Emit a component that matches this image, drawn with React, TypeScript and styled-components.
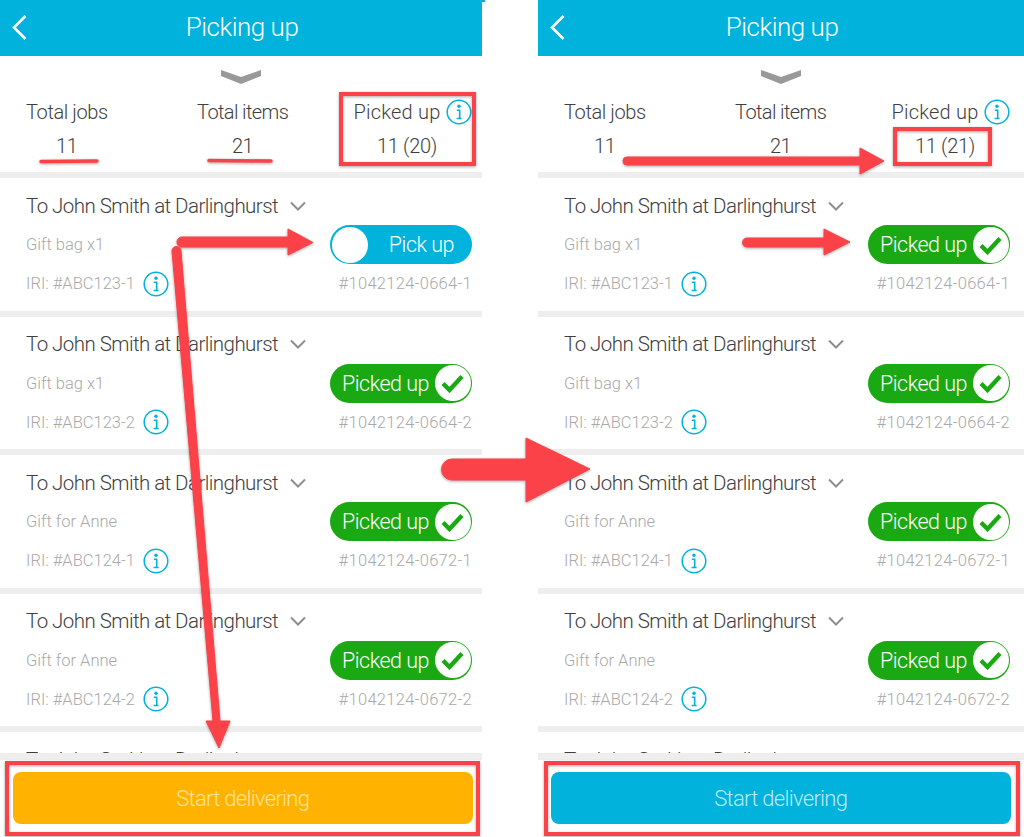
import { createGlobalStyle } from "styled-components";
import styled from "styled-components";

const GlobalStyle = createGlobalStyle`
  html, body {
    margin: 0;
    padding: 0;
    background: #fff;
  }
  body {
    font-family: Roboto, "Liberation Sans", sans-serif;
    font-weight: 300;
    overflow: hidden;
  }
`;

const BLUE = "#00b2dc";
const GREEN = "#1ba913";
const ORANGE = "#ffb300";
const RED = "#fb4248";
const SEP = "#eeeeee";

const Page = styled.div`
  position: relative;
  display: flex;
  gap: 56px;
  width: 1024px;
  height: 837px;
  overflow: hidden;
`;
const Phone = styled.div<{ $width: number }>`
  display: flex;
  flex-direction: column;
  flex: none;
  width: ${(props) => props.$width}px;
  height: 837px;
`;
const Header = styled.div<{ $notch: boolean }>`
  position: relative;
  flex: none;
  display: flex;
  align-items: center;
  justify-content: center;
  height: 56px;
  background-color: ${BLUE};
  color: #fff;
  font-size: 26px;
  letter-spacing: -0.5px;
  padding-bottom: 2px;
  padding-left: 2px;
  box-sizing: border-box;

  &::after {
    content: "";
    display: ${(props) => (props.$notch ? "block" : "none")};
    position: absolute;
    left: 100%;
    top: 0;
    width: 3px;
    height: 2px;
    background-color: ${BLUE};
  }
`;
const BackIcon = styled.svg`
  position: absolute;
  left: 11px;
  top: 14px;
  width: 17px;
  height: 27px;
`;
const Summary = styled.div`
  flex: none;
  height: 116px;
  box-sizing: border-box;
`;
const BigChevron = styled.svg`
  display: block;
  width: 40px;
  height: 16px;
  margin: 13px auto 0;
`;
const Stats = styled.div`
  display: grid;
  grid-template-columns: 171px 156.5px 1fr;
  padding: 11px 0 0 26px;
`;
const Stat = styled.div`
  justify-self: start;
  display: flex;
  flex-direction: column;
  color: #3e3e3e;
  font-size: 20px;
`;
const StatLabel = styled.div<{ $spacing: number }>`
  display: flex;
  align-items: center;
  gap: 6px;
  height: 32px;
  letter-spacing: ${(props) => props.$spacing}px;
  white-space: nowrap;
`;
const StatValue = styled.div<{ $offset?: number }>`
  margin-top: 2px;
  height: 32px;
  line-height: 32px;
  letter-spacing: -0.35px;
  text-align: center;
  padding-right: ${(props) => props.$offset || 0}px;
`;
const List = styled.div`
  flex: 1;
  min-height: 0;
  overflow: hidden;
`;
const Card = styled.div`
  border-top: 6px solid ${SEP};
  padding: 8px 0 7.6px 26px;
`;
const Row = styled.div`
  display: flex;
  align-items: center;
  height: 39px;
  width: 446px;
  justify-content: space-between;
`;
const Title = styled.div`
  display: flex;
  align-items: center;
  gap: 12px;
  color: #3e3e3e;
  font-size: 20.5px;
  letter-spacing: -0.55px;
  white-space: nowrap;
`;
const Muted = styled.div<{ $wide?: boolean }>`
  display: flex;
  align-items: center;
  gap: 8px;
  color: #a9a9a9;
  font-size: 16.5px;
  letter-spacing: ${(props) => (props.$wide ? "0.3px" : "0")};
  white-space: nowrap;
`;
const Toggle = styled.div<{ $on: boolean }>`
  display: flex;
  align-items: center;
  justify-content: space-between;
  flex-direction: ${(props) => (props.$on ? "row" : "row-reverse")};
  box-sizing: border-box;
  width: 142px;
  height: 39px;
  border-radius: 20px;
  padding: ${(props) => (props.$on ? "0 1.5px 0 12px" : "0 18px 0 2px")};
  background-color: ${(props) => (props.$on ? GREEN : BLUE)};
  color: #fff;
  font-size: 21.5px;
  letter-spacing: -0.5px;
`;
const Knob = styled.div`
  display: flex;
  align-items: center;
  justify-content: center;
  width: 36px;
  height: 36px;
  border-radius: 50%;
  background-color: #fff;
`;
const Footer = styled.div`
  flex: none;
  box-sizing: border-box;
  height: 84px;
  border-top: 7px solid ${SEP};
  padding: 12px 0 13px 13px;
  background-color: #fff;
`;
const StartButton = styled.div<{ $color: string; $text: string }>`
  display: flex;
  align-items: center;
  justify-content: center;
  width: 459.5px;
  height: 52px;
  border-radius: 8px;
  background-color: ${(props) => props.$color};
  color: ${(props) => props.$text};
  font-size: 22px;
  letter-spacing: -0.7px;
`;
const Annotations = styled.svg`
  position: absolute;
  left: 0;
  top: 0;
  width: 1024px;
  height: 837px;
  pointer-events: none;
  filter: drop-shadow(0 1px 1.5px rgba(0, 0, 0, 0.35));
`;

function InfoIcon() {
  return (
    <svg width="26" height="26" viewBox="0 0 26 26" fill="none">
      <circle cx="13" cy="13" r="11.8" stroke={BLUE} strokeWidth="1.5" />
      <circle cx="13" cy="7.2" r="1.7" fill={BLUE} />
      <path d="M10.8 11.2h2.9v8M10.6 19.5h5" stroke={BLUE} strokeWidth="1.6" />
    </svg>
  );
}

function SmallChevron() {
  return (
    <svg width="16" height="10" viewBox="0 0 16 10" fill="none">
      <path d="M1 1.5 8 8.5 15 1.5" stroke="#8e8e8e" strokeWidth="2" />
    </svg>
  );
}

function PickToggle({ on }: { on: boolean }) {
  return (
    <Toggle $on={on}>
      <span>{on ? "Picked up" : "Pick up"}</span>
      <Knob>
        {on ? (
          <svg width="25" height="20" viewBox="0 0 25 20" fill="none">
            <path d="M3 10.5 9.5 17 22 3.5" stroke={GREEN} strokeWidth="4.4" />
          </svg>
        ) : null}
      </Knob>
    </Toggle>
  );
}

const jobs = [
  { item: "Gift bag x1", iri: "IRI: #ABC123-1", ref: "#1042124-0664-1" },
  { item: "Gift bag x1", iri: "IRI: #ABC123-2", ref: "#1042124-0664-2" },
  { item: "Gift for Anne", iri: "IRI: #ABC124-1", ref: "#1042124-0672-1" },
  { item: "Gift for Anne", iri: "IRI: #ABC124-2", ref: "#1042124-0672-2" },
];

interface PickingProps {
  width: number;
  notch: boolean;
  picked: string;
  firstOn: boolean;
  color: string;
  text: string;
}

function Picking({ width, notch, picked, firstOn, color, text }: PickingProps) {
  return (
    <Phone $width={width}>
      <Header $notch={notch}>
        <BackIcon viewBox="0 0 17 27" fill="none">
          <path d="M14.5 2 3 13.5 14.5 25" stroke="#fff" strokeWidth="2.6" />
        </BackIcon>
        Picking up
      </Header>
      <Summary>
        <BigChevron viewBox="0 0 40 16" fill="#999999">
          <polygon points="0,1 20,8 40,1 40,7 20,15 0,7" />
        </BigChevron>
        <Stats>
          <Stat>
            <StatLabel $spacing={-0.4}>Total jobs</StatLabel>
            <StatValue>11</StatValue>
          </Stat>
          <Stat>
            <StatLabel $spacing={-0.6}>Total items</StatLabel>
            <StatValue>21</StatValue>
          </Stat>
          <Stat>
            <StatLabel $spacing={0.2}>
              Picked up
              <InfoIcon />
            </StatLabel>
            <StatValue $offset={12}>{picked}</StatValue>
          </Stat>
        </Stats>
      </Summary>
      <List>
        {jobs.map((job, index) => (
          <Card key={job.iri}>
            <Row>
              <Title>
                To John Smith at Darlinghurst
                <SmallChevron />
              </Title>
            </Row>
            <Row>
              <Muted>{job.item}</Muted>
              <PickToggle on={index > 0 || firstOn} />
            </Row>
            <Row>
              <Muted>
                {job.iri}
                <InfoIcon />
              </Muted>
              <Muted $wide>{job.ref}</Muted>
            </Row>
          </Card>
        ))}
        <Card>
          <Row>
            <Title>
              To John Smith at Darlinghurst
              <SmallChevron />
            </Title>
          </Row>
        </Card>
      </List>
      <Footer>
        <StartButton $color={color} $text={text}>
          Start delivering
        </StartButton>
      </Footer>
    </Phone>
  );
}

export default function App() {
  return (
    <>
      <GlobalStyle />
      <Page>
        <Picking
          width={482}
          notch={true}
          picked="11 (20)"
          firstOn={false}
          color={ORANGE}
          text="#ffe39a"
        />
        <Picking
          width={486}
          notch={false}
          picked="11 (21)"
          firstOn={true}
          color={BLUE}
          text="#b8ecf6"
        />
        <Annotations viewBox="0 0 1024 837" fill="none">
          <g stroke={RED} strokeWidth="4">
            <rect x="341" y="94" width="133" height="70" />
            <rect x="895" y="129" width="95" height="35" />
            <rect x="7" y="763" width="471" height="71" />
            <rect x="546" y="763" width="472" height="71" />
          </g>
          <g stroke={RED} strokeWidth="3.5" strokeLinecap="round">
            <path d="M41 161.5 97 161" />
            <path d="M209 160.5 271 161" />
          </g>
          <g fill={RED} stroke={RED} strokeLinejoin="round">
            <path d="M182 237h106v-8l25 13.5-25 12.5v-8H182a5 5 0 0 1 0-10Z" />
            <path d="M172 251a4.5 4.5 0 0 1 9 0L220 721h10l-11 27-13-27h7Z" />
            <path d="M627 157h233v-9l24 13-24 13v-9H627a4 4 0 0 1 0-8Z" />
            <path d="M747 238h77v-9l26 13-26 13v-8h-77a4.5 4.5 0 0 1 0-9Z" />
            <path d="M452 459h74v-21l64 31-64 33v-22h-74a10.5 10.5 0 0 1 0-21Z" />
          </g>
        </Annotations>
      </Page>
    </>
  );
}
